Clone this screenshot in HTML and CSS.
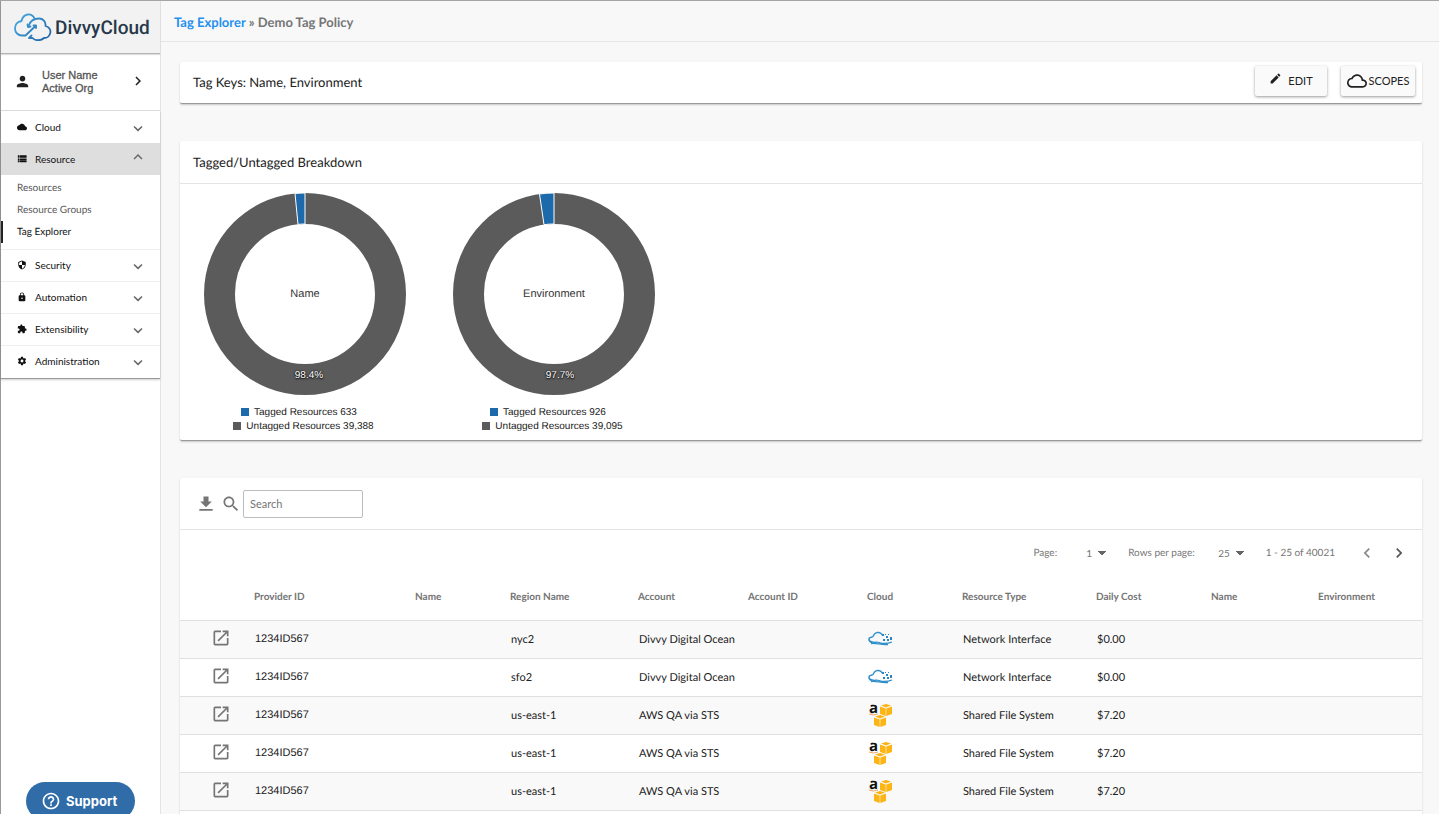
FILE: index.html
```html
<!DOCTYPE html>
<html lang="en">
<head>
    <meta charset="UTF-8">
    <meta name="viewport" content="width=device-width, initial-scale=1.0">
    <title>DivvyCloud - Tag Explorer</title>
    <link rel="stylesheet" href="styles.css">
</head>
<body>

<!-- Shared icons -->
<svg class="sprite" aria-hidden="true">
    <symbol id="chevron-down" viewBox="0 0 24 24"><path d="M7.41 7.84L12 12.42l4.59-4.58L18 9.25l-6 6-6-6z"/></symbol>
    <symbol id="chevron-up" viewBox="0 0 24 24"><path d="M7.41 15.41L12 10.83l4.59 4.58L18 14l-6-6-6 6z"/></symbol>
    <symbol id="chevron-right" viewBox="0 0 24 24"><path d="M8.59 16.59L13.17 12 8.59 7.41 10 6l6 6-6 6z"/></symbol>
    <symbol id="chevron-left" viewBox="0 0 24 24"><path d="M15.41 16.59L10.83 12l4.58-4.59L14 6l-6 6 6 6z"/></symbol>
    <symbol id="open" viewBox="0 0 24 24"><path d="M19 19H5V5h7V3H5c-1.11 0-2 .9-2 2v14c0 1.1.89 2 2 2h14c1.1 0 2-.9 2-2v-7h-2v7zM14 3v2h3.59l-9.83 9.83 1.41 1.41L19 6.41V10h2V3h-7z"/></symbol>
    <symbol id="ocean" viewBox="0 0 26 16">
        <path d="M4 11.500C0 10.500 0 6.500 4 6C5 6 5 5.500 5.500 4.500C7 1 11 .8 13 2.500L14.500 4" fill="none" stroke="#3a93cc" stroke-width="1.600"/>
        <path d="M2 10C5 12.500 8 10.500 11 11.500C15 13 19 13 24 11M3 12.500C9 11.500 13 14.500 20 13.500" fill="none" stroke="#2f8fcb" stroke-width="1.300"/>
        <path d="M14 3h2v2h-2zM17 3h1v1h-1zM18 5h2v2h-2zM22 6h2v3h-2zM15 8h2v2h-2zM19 8h2v2h-2zM20 3h1v1h-1z" fill="#2a83c2"/>
    </symbol>
    <symbol id="box" viewBox="0 0 12 12">
        <path d="M6 0l5 1.500-5 2-5-2z" fill="#fbb316"/>
        <path d="M0 2.500l5.700 2v7.500L0 10zM12 2.500L6.300 4.500v7.500L12 10z" fill="#fcb514"/>
    </symbol>
</svg>

<div class="app">
    <aside class="sidebar">
        <div class="brand">
            <svg class="brand-mark" viewBox="0 0 38 28" aria-hidden="true">
                <defs>
                    <linearGradient id="brand-blue" gradientUnits="userSpaceOnUse" x1="4" y1="2" x2="34" y2="28">
                        <stop offset="0" stop-color="#45a9e0"/>
                        <stop offset="1" stop-color="#1d62a8"/>
                    </linearGradient>
                </defs>
                <g fill="none" stroke="url(#brand-blue)" stroke-width="1.800" stroke-linecap="round" stroke-linejoin="round">
                    <path d="M20.500 5.500C18 0 9.500-.5 7.500 8C3 8.500 1 12 1 15.500C1 19.500 4 22.500 8 22.500H11.500L21.500 13"/>
                    <path d="M19.500 12.500L22 12.500L22 15"/>
                    <path d="M14.500 13C16 8.500 20 5.500 25 5.500C29 5.500 32 8.500 31.500 13C35 14 36.500 16.500 36.500 19C36 23 33 25 30 25C27 28 21 28 18.500 25H15L17.500 22.500"/>
                    <path d="M13.500 11.500L14 14L16.500 13.500"/>
                </g>
            </svg>
            <span class="brand-name">DivvyCloud</span>
        </div>

        <button class="user" type="button">
            <svg class="user-icon" viewBox="0 0 24 24" aria-hidden="true"><path d="M12 12c2.210 0 4-1.790 4-4s-1.790-4-4-4-4 1.790-4 4 1.790 4 4 4zm0 2c-2.670 0-8 1.340-8 4v2h16v-2c0-2.660-5.330-4-8-4z"/></svg>
            <span class="user-text">User Name<br>Active Org</span>
            <svg class="user-arrow" viewBox="0 0 24 24" aria-hidden="true"><use href="#chevron-right"/></svg>
        </button>

        <nav class="menu">
            <button class="menu-item" type="button">
                <svg class="menu-icon" viewBox="0 0 24 24" aria-hidden="true"><path d="M19.350 10.040C18.670 6.590 15.640 4 12 4 9.110 4 6.600 5.640 5.350 8.040 2.340 8.360 0 10.910 0 14c0 3.310 2.690 6 6 6h13c2.760 0 5-2.240 5-5 0-2.640-2.050-4.780-4.650-4.960z"/></svg>
                <span>Cloud</span>
                <svg class="menu-arrow" viewBox="0 0 24 24" aria-hidden="true"><use href="#chevron-down"/></svg>
            </button>
            <button class="menu-item open" type="button" aria-expanded="true">
                <svg class="menu-icon" viewBox="0 0 24 24" aria-hidden="true"><path d="M2 3h3v4H2zM6 3h17v4H6zM2 8h3v3H2zM6 8h17v3H6zM2 12h3v4H2zM6 12h17v4H6zM2 17h3v3H2zM6 17h17v3H6z"/></svg>
                <span>Resource</span>
                <svg class="menu-arrow" viewBox="0 0 24 24" aria-hidden="true"><use href="#chevron-up"/></svg>
            </button>
            <div class="submenu">
                <a href="#">Resources</a>
                <a href="#">Resource Groups</a>
                <a href="#" class="active">Tag Explorer</a>
            </div>
            <button class="menu-item" type="button">
                <svg class="menu-icon" viewBox="0 0 24 24" aria-hidden="true"><path d="M12 1L3 5v6c0 5.550 3.840 10.740 9 12 5.160-1.260 9-6.450 9-12V5l-9-4zm0 10.990h7c-.53 4.120-3.280 7.790-7 8.940V12H5V6.300l7-3.110v8.800z"/></svg>
                <span>Security</span>
                <svg class="menu-arrow" viewBox="0 0 24 24" aria-hidden="true"><use href="#chevron-down"/></svg>
            </button>
            <button class="menu-item" type="button">
                <svg class="menu-icon" viewBox="0 0 24 24" aria-hidden="true"><path d="M18 8h-1V6c0-2.760-2.240-5-5-5S7 3.240 7 6v2H6c-1.100 0-2 .9-2 2v10c0 1.100.9 2 2 2h12c1.100 0 2-.9 2-2V10c0-1.100-.9-2-2-2zm-6 9c-1.100 0-2-.9-2-2s.9-2 2-2 2 .9 2 2-.9 2-2 2zm3.100-9H8.900V6c0-1.710 1.390-3.100 3.100-3.100 1.710 0 3.100 1.390 3.100 3.100v2z"/></svg>
                <span>Automation</span>
                <svg class="menu-arrow" viewBox="0 0 24 24" aria-hidden="true"><use href="#chevron-down"/></svg>
            </button>
            <button class="menu-item" type="button">
                <svg class="menu-icon" viewBox="0 0 24 24" aria-hidden="true"><path d="M20.500 11H19V7c0-1.100-.9-2-2-2h-4V3.500C13 2.120 11.880 1 10.500 1S8 2.120 8 3.500V5H4c-1.100 0-1.990.9-1.990 2v3.800H3.500c1.490 0 2.700 1.210 2.700 2.700s-1.210 2.700-2.700 2.700H2V20c0 1.100.9 2 2 2h3.800v-1.500c0-1.490 1.210-2.700 2.700-2.700 1.490 0 2.700 1.210 2.700 2.700V22H17c1.100 0 2-.9 2-2v-4h1.500c1.380 0 2.500-1.120 2.500-2.500S21.880 11 20.500 11z"/></svg>
                <span>Extensibility</span>
                <svg class="menu-arrow" viewBox="0 0 24 24" aria-hidden="true"><use href="#chevron-down"/></svg>
            </button>
            <button class="menu-item" type="button">
                <svg class="menu-icon" viewBox="0 0 24 24" aria-hidden="true"><path d="M19.430 12.980c.04-.32.07-.64.07-.98s-.03-.66-.07-.98l2.110-1.650c.19-.15.24-.42.12-.64l-2-3.460c-.12-.22-.39-.3-.61-.22l-2.490 1c-.52-.4-1.080-.73-1.690-.98l-.38-2.650C14.460 2.180 14.250 2 14 2h-4c-.25 0-.46.18-.49.42l-.38 2.650c-.61.25-1.170.59-1.690.98l-2.490-1c-.23-.09-.49 0-.61.22l-2 3.460c-.13.22-.07.49.12.64l2.110 1.650c-.04.32-.07.65-.07.98s.03.66.07.98l-2.110 1.650c-.19.15-.24.42-.12.64l2 3.460c.12.22.39.3.61.22l2.490-1c.52.4 1.080.73 1.690.98l.38 2.650c.03.24.24.42.49.42h4c.25 0 .46-.18.49-.42l.38-2.650c.61-.25 1.170-.59 1.690-.98l2.490 1c.23.09.49 0 .61-.22l2-3.460c.12-.22.07-.49-.12-.64l-2.110-1.650zM12 15.500c-1.930 0-3.500-1.570-3.500-3.500s1.570-3.500 3.500-3.500 3.500 1.570 3.500 3.500-1.570 3.500-3.500 3.500z"/></svg>
                <span>Administration</span>
                <svg class="menu-arrow" viewBox="0 0 24 24" aria-hidden="true"><use href="#chevron-down"/></svg>
            </button>
        </nav>
    </aside>

    <div class="page">
        <header class="topbar">
            <a href="#">Tag Explorer</a> » Demo Tag Policy
        </header>

        <main class="content">
            <section class="card keys">
                <h2>Tag Keys: Name, Environment</h2>
                <button class="btn" type="button">
                    <svg class="pencil" viewBox="0 0 24 24" aria-hidden="true"><path d="M3 17.250V21h3.750L17.810 9.940l-3.750-3.750L3 17.250zM20.710 7.040c.39-.39.39-1.020 0-1.410l-2.340-2.340c-.39-.39-1.020-.39-1.410 0l-1.830 1.830 3.750 3.750 1.830-1.830z"/></svg>
                    EDIT
                </button>
                <button class="btn btn-scopes" type="button">
                    <svg class="cloud" viewBox="0 0 24 24" aria-hidden="true"><path d="M19.350 10.040C18.670 6.590 15.640 4 12 4 9.110 4 6.600 5.640 5.350 8.040 2.340 8.360 0 10.910 0 14c0 3.310 2.690 6 6 6h13c2.760 0 5-2.240 5-5 0-2.640-2.050-4.780-4.650-4.960zM19 18H6c-2.210 0-4-1.790-4-4s1.790-4 4-4h.71C7.370 7.690 9.480 6 12 6c3.040 0 5.500 2.460 5.500 5.500v.5H19c1.660 0 3 1.340 3 3s-1.340 3-3 3z"/></svg>
                    SCOPES
                </button>
            </section>

            <section class="card">
                <h2 class="card-title">Tagged/Untagged Breakdown</h2>
                <div class="charts">
                    <figure class="chart">
                        <svg class="donut" viewBox="0 0 202 202" role="img" aria-label="Name: 98.4% untagged">
                            <circle cx="101" cy="101" r="85.500" fill="none" stroke="#5b5b5b" stroke-width="31"/>
                            <path d="M101 0L101 31A70 70 0 0 0 94 31.400L91 0.500A101 101 0 0 1 101 0z" fill="#1c6aab" stroke="#fff"/>
                            <text x="101" y="104" class="donut-name">Name</text>
                            <text x="105" y="185" class="donut-value">98.4%</text>
                        </svg>
                        <figcaption class="legend">
                            <span class="legend-row"><i class="swatch tagged"></i>Tagged Resources 633</span>
                            <span class="legend-row"><i class="swatch"></i>Untagged Resources 39,388</span>
                        </figcaption>
                    </figure>
                    <figure class="chart">
                        <svg class="donut" viewBox="0 0 202 202" role="img" aria-label="Environment: 97.7% untagged">
                            <circle cx="101" cy="101" r="85.500" fill="none" stroke="#5b5b5b" stroke-width="31"/>
                            <path d="M101 0L101 31A70 70 0 0 0 91 31.700L86.500 1A101 101 0 0 1 101 0z" fill="#1c6aab" stroke="#fff"/>
                            <text x="101" y="104" class="donut-name">Environment</text>
                            <text x="107" y="185" class="donut-value">97.7%</text>
                        </svg>
                        <figcaption class="legend">
                            <span class="legend-row"><i class="swatch tagged"></i>Tagged Resources 926</span>
                            <span class="legend-row"><i class="swatch"></i>Untagged Resources 39,095</span>
                        </figcaption>
                    </figure>
                </div>
            </section>

            <section class="card listing">
                <div class="toolbar">
                    <button class="icon-btn" type="button" aria-label="Download">
                        <svg viewBox="0 0 24 24" aria-hidden="true"><path d="M19 9h-4V3H9v6H5l7 7 7-7zM4 18v2h16v-2H4z"/></svg>
                    </button>
                    <div class="search-box">
                        <label for="search" class="icon-btn" aria-label="Search">
                            <svg viewBox="0 0 24 24" aria-hidden="true"><path d="M15.500 14h-.79l-.28-.27C15.410 12.590 16 11.110 16 9.500 16 5.910 13.090 3 9.500 3S3 5.910 3 9.500 5.910 16 9.500 16c1.610 0 3.090-.59 4.230-1.570l.27.28v.79l5 4.990L20.490 19l-4.990-5zm-6 0C7.010 14 5 11.990 5 9.500S7.010 5 9.500 5 14 7.010 14 9.500 11.990 14 9.500 14z"/></svg>
                        </label>
                        <input type="text" id="search" class="search" placeholder="Search">
                    </div>
                </div>

                <div class="pager">
                    <label for="page">Page:</label>
                    <select id="page"><option>1</option></select>
                    <label for="rows">Rows per page:</label>
                    <select id="rows"><option>25</option></select>
                    <span class="range">1 - 25 of 40021</span>
                    <button class="page-btn" type="button" aria-label="Previous page" disabled><svg viewBox="0 0 24 24" aria-hidden="true"><use href="#chevron-left"/></svg></button>
                    <button class="page-btn" type="button" aria-label="Next page"><svg viewBox="0 0 24 24" aria-hidden="true"><use href="#chevron-right"/></svg></button>
                </div>

                <table class="resources">
                    <thead>
                        <tr>
                            <th class="col-open"></th>
                            <th class="col-provider">Provider ID</th>
                            <th class="col-name">Name</th>
                            <th class="col-region">Region Name</th>
                            <th class="col-account">Account</th>
                            <th class="col-account-id">Account ID</th>
                            <th class="col-cloud">Cloud</th>
                            <th class="col-type">Resource Type</th>
                            <th class="col-cost">Daily Cost</th>
                            <th class="col-tag">Name</th>
                            <th class="col-env">Environment</th>
                        </tr>
                    </thead>
                    <tbody>
                        <tr>
                            <td class="open-cell"><a href="#" aria-label="Open"><svg viewBox="0 0 24 24"><use href="#open"/></svg></a></td>
                            <td class="provider">1234ID567</td><td></td><td>nyc2</td><td>Divvy Digital Ocean</td><td></td>
                            <td class="cloud-cell"><svg class="ocean" role="img" aria-label="Digital Ocean"><use href="#ocean"/></svg></td>
                            <td>Network Interface</td><td>$0.00</td><td></td><td></td>
                        </tr>
                        <tr>
                            <td class="open-cell"><a href="#" aria-label="Open"><svg viewBox="0 0 24 24"><use href="#open"/></svg></a></td>
                            <td class="provider">1234ID567</td><td></td><td>sfo2</td><td>Divvy Digital Ocean</td><td></td>
                            <td class="cloud-cell"><svg class="ocean" role="img" aria-label="Digital Ocean"><use href="#ocean"/></svg></td>
                            <td>Network Interface</td><td>$0.00</td><td></td><td></td>
                        </tr>
                        <tr>
                            <td class="open-cell"><a href="#" aria-label="Open"><svg viewBox="0 0 24 24"><use href="#open"/></svg></a></td>
                            <td class="provider">1234ID567</td><td></td><td>us-east-1</td><td>AWS QA via STS</td><td></td>
                            <td class="cloud-cell">
                                <svg class="aws" viewBox="0 -6 25 36" role="img" aria-label="Amazon Web Services">
                                    <text x="1" y="10" class="aws-letter">a</text>
                                    <path d="M1 11Q5 13 10 11" fill="none" stroke="#f0a66a"/>
                                    <use href="#box" x="12" y="1" width="12" height="12"/>
                                    <use href="#box" x="6" y="12" width="12" height="12"/>
                                </svg>
                            </td>
                            <td>Shared File System</td><td>$7.20</td><td></td><td></td>
                        </tr>
                        <tr>
                            <td class="open-cell"><a href="#" aria-label="Open"><svg viewBox="0 0 24 24"><use href="#open"/></svg></a></td>
                            <td class="provider">1234ID567</td><td></td><td>us-east-1</td><td>AWS QA via STS</td><td></td>
                            <td class="cloud-cell">
                                <svg class="aws" viewBox="0 -6 25 36" role="img" aria-label="Amazon Web Services">
                                    <text x="1" y="10" class="aws-letter">a</text>
                                    <path d="M1 11Q5 13 10 11" fill="none" stroke="#f0a66a"/>
                                    <use href="#box" x="12" y="1" width="12" height="12"/>
                                    <use href="#box" x="6" y="12" width="12" height="12"/>
                                </svg>
                            </td>
                            <td>Shared File System</td><td>$7.20</td><td></td><td></td>
                        </tr>
                        <tr>
                            <td class="open-cell"><a href="#" aria-label="Open"><svg viewBox="0 0 24 24"><use href="#open"/></svg></a></td>
                            <td class="provider">1234ID567</td><td></td><td>us-east-1</td><td>AWS QA via STS</td><td></td>
                            <td class="cloud-cell">
                                <svg class="aws" viewBox="0 -6 25 36" role="img" aria-label="Amazon Web Services">
                                    <text x="1" y="10" class="aws-letter">a</text>
                                    <path d="M1 11Q5 13 10 11" fill="none" stroke="#f0a66a"/>
                                    <use href="#box" x="12" y="1" width="12" height="12"/>
                                    <use href="#box" x="6" y="12" width="12" height="12"/>
                                </svg>
                            </td>
                            <td>Shared File System</td><td>$7.20</td><td></td><td></td>
                        </tr>
                    </tbody>
                </table>
            </section>
        </main>
    </div>
</div>

<button class="support" type="button">
    <svg viewBox="0 0 24 24" aria-hidden="true"><path d="M11 18h2v-2h-2v2zm1-16C6.480 2 2 6.480 2 12s4.480 10 10 10 10-4.480 10-10S17.520 2 12 2zm0 18c-4.410 0-8-3.590-8-8s3.590-8 8-8 8 3.590 8 8-3.590 8-8 8zm0-14c-2.210 0-4 1.790-4 4h2c0-1.100.9-2 2-2s2 .9 2 2c0 2-3 1.750-3 5h2c0-2.250 3-2.500 3-5 0-2.210-1.790-4-4-4z"/></svg>
    Support
</button>

</body>
</html>
```
FILE: styles.css
```css
* {
    box-sizing: border-box;
}

body {
    margin: 0;
    font-family: Lato, sans-serif;
    font-size: 11px;
    line-height: 16px;
    color: #212121;
    background-color: #f8f8f8;
    height: 100vh;
    overflow: hidden;
    text-rendering: geometricPrecision;
}

button {
    font: inherit;
    color: inherit;
    border: none;
    background: none;
    padding: 0;
    cursor: pointer;
}

a {
    color: inherit;
    text-decoration: none;
}

svg {
    display: block;
    flex: none;
    fill: currentColor;
}

.sprite {
    position: absolute;
    width: 0;
    height: 0;
}

.app {
    display: flex;
    min-height: 100vh;
    border-top: 1px solid #a5a5a5;
}

/* Sidebar */
.sidebar {
    flex: none;
    width: 161px;
    background-color: #fff;
    border-left: 1px solid #999;
    border-right: 1px solid #e4e4e4;
}

.brand {
    display: flex;
    align-items: center;
    gap: 3px;
    height: 53px;
    padding-left: 13px;
    background-color: #f2f2f2;
    border-bottom: 1px solid #b4b4b4;
    box-shadow: 0 1px 1px rgba(0, 0, 0, 0.12);
}

.brand-mark {
    width: 38px;
    height: 28px;
}

.brand-name {
    font-family: Roboto, sans-serif;
    font-size: 19px;
    font-weight: 500;
    line-height: 24px;
    color: #26384a;
    padding-top: 2px;
}

.user {
    display: flex;
    align-items: center;
    width: 100%;
    height: 57px;
    padding: 0 13px 2px;
    border-bottom: 1px solid #ddd;
    text-align: left;
}

.user-icon {
    width: 17px;
    height: 17px;
}

.user-text {
    flex: 1;
    padding: 2px 0 0 11px;
    font-family: "Liberation Sans", sans-serif;
    font-size: 11px;
    line-height: 13px;
    color: #555;
    -webkit-text-stroke: 0.3px #555;
}

.user-arrow {
    width: 18px;
    height: 18px;
}

.menu {
    padding-bottom: 1px;
    border-bottom: 1px solid #999;
    box-shadow: 0 1px 2px rgba(0, 0, 0, 0.2);
}

.menu-item {
    display: flex;
    align-items: center;
    width: 100%;
    height: 32px;
    padding: 0 13px 1px 16px;
    font-size: 10px;
    color: #111;
    box-shadow: inset 0 1px #eee;
    text-align: left;
}

.menu-item:first-child {
    box-shadow: none;
}

.menu-item span {
    flex: 1;
    padding-left: 8px;
}

.menu-icon {
    width: 10px;
    height: 10px;
}

.menu-arrow {
    width: 18px;
    height: 18px;
    margin-top: 5px;
    color: #666;
}

.menu-item.open {
    background-color: #dedede;
    box-shadow: none;
}

.menu-item.open .menu-arrow {
    margin-top: 0;
    margin-bottom: 4px;
}

.submenu {
    padding: 2px 0 6px;
}

.submenu a {
    display: block;
    padding: 3px 0 3px 16px;
    font-size: 10px;
    color: #555;
}

.submenu .active {
    color: #111;
    box-shadow: inset 2px 0 #222;
}

/* Page */
.page {
    flex: 1;
    min-width: 0;
}

.topbar {
    height: 41px;
    padding: 12px 13px;
    font-size: 13px;
    line-height: 18px;
    font-weight: bold;
    color: #757575;
    border-bottom: 1px solid #e6e6e6;
}

.topbar a {
    color: #2391ee;
}

.content {
    display: flex;
    flex-direction: column;
    gap: 37px;
    padding: 20px 17px 0 19px;
}

.card {
    background-color: #fff;
    border-bottom: 1px solid #999;
    border-radius: 2px;
    box-shadow: 0 1px 2px rgba(0, 0, 0, 0.2);
}

h2 {
    margin: 0;
    font-size: 13px;
    line-height: 18px;
    font-weight: normal;
}

.keys {
    display: flex;
    gap: 14px;
    height: 42px;
    padding: 4px 7px 0 13px;
}

.keys h2 {
    flex: 1;
    padding-top: 7px;
}

.btn {
    display: flex;
    justify-content: center;
    align-items: center;
    gap: 6px;
    width: 72px;
    height: 30px;
    background-color: #fafafa;
    border-radius: 2px;
    box-shadow: 0 1px 3px rgba(0, 0, 0, 0.4);
}

.btn-scopes {
    gap: 2px;
    width: 74px;
}

.pencil {
    width: 13px;
    height: 13px;
    margin-bottom: 6px;
}

.cloud {
    width: 20px;
    height: 20px;
}

.card-title {
    padding: 12px 13px;
    border-bottom: 1px solid #e4e4e4;
}

/* Charts */
.charts {
    display: flex;
    gap: 47px;
    padding: 9px 24px 6px;
}

.chart {
    margin: 0;
    font-family: "Liberation Sans", sans-serif;
}

.donut {
    width: 202px;
    height: 202px;
}

.donut-name {
    font-size: 11px;
    text-anchor: middle;
    fill: #333;
}

.donut-value {
    font-size: 10px;
    text-anchor: middle;
    fill: #fff;
    text-shadow: 0 0 2px #000, 0 1px 2px #000;
}

.legend {
    display: flex;
    flex-direction: column;
    align-items: center;
    padding-top: 11px;
    font-size: 10px;
    line-height: 14px;
}

.legend-row {
    display: flex;
    align-items: center;
    gap: 5px;
    padding-right: 3px;
}

.legend-row:first-child {
    padding-right: 12px;
}

.swatch {
    width: 8px;
    height: 8px;
    margin-bottom: 2px;
    background-color: #5b5b5b;
}

.swatch.tagged {
    background-color: #1c6aab;
}

/* Table card */
.listing {
    padding-bottom: 20px;
}

.toolbar {
    display: flex;
    align-items: center;
    gap: 5px;
    height: 52px;
    padding: 0 16px;
    border-bottom: 1px solid #e4e4e4;
}

.search-box {
    display: flex;
    align-items: center;
    gap: 2px;
}

.icon-btn {
    color: #757575;
}

.icon-btn svg {
    width: 20px;
    height: 20px;
}

.search {
    width: 120px;
    height: 28px;
    padding: 0 6px;
    font: inherit;
    border: 1px solid #bbb;
    border-radius: 2px;
}

.search::placeholder {
    color: #757575;
}

.pager {
    display: flex;
    justify-content: flex-end;
    align-items: center;
    height: 45px;
    padding-right: 13px;
    font-size: 10px;
    color: #757575;
}

.pager select {
    appearance: none;
    width: 49px;
    height: 16px;
    margin: 0 22px 0 0;
    padding: 0 14px 0 0;
    font: inherit;
    color: inherit;
    border: none;
    /* two halves of the drop-down arrow */
    background-image: linear-gradient(to bottom left, #666 50%, transparent 50%), linear-gradient(to bottom right, #666 50%, transparent 50%);
    background-position: right 4px top 6px, right 0 top 6px;
    background-size: 4px 5px;
    background-repeat: no-repeat;
    background-color: transparent;
    text-align: right;
    text-align-last: right;
}

.range {
    margin-right: 22px;
}

.page-btn {
    color: #555;
}

.page-btn + .page-btn {
    margin-left: 12px;
}

.page-btn:disabled {
    color: #888;
}

.page-btn svg {
    width: 20px;
    height: 20px;
}

.resources {
    width: 100%;
    table-layout: fixed;
    border-collapse: collapse;
}

.resources th {
    height: 45px;
    padding: 0;
    font-size: 10px;
    color: #757575;
    text-align: left;
}

.resources td {
    height: 38px;
    padding: 2px 0 0 1px;
    border-top: 1px solid #e0e0e0;
}

.resources tbody tr:nth-child(odd) {
    background-color: #f9f9f9;
}

.resources tbody tr:last-child td {
    border-bottom: 1px solid #e0e0e0;
}

.resources .open-cell {
    padding: 0 0 2px 31px;
    color: #757575;
}

.resources .cloud-cell {
    padding-top: 0;
}

.open-cell svg {
    width: 20px;
    height: 20px;
}

.resources .provider {
    padding-top: 0;
    font-family: "Liberation Sans", sans-serif;
}

.col-open { width: 74px; }
.col-provider { width: 161px; }
.col-name { width: 95px; }
.col-region { width: 128px; }
.col-account { width: 110px; }
.col-account-id { width: 119px; }
.col-cloud { width: 95px; }
.col-type { width: 134px; }
.col-cost { width: 115px; }
.col-tag { width: 107px; }
.col-env { width: 104px; }

.ocean {
    width: 26px;
    height: 16px;
}

.aws {
    width: 25px;
    height: 36px;
}

.aws-letter {
    font-family: "Open Sans", sans-serif;
    font-size: 15px;
    font-weight: bold;
    fill: #111;
}

/* Support widget */
.support {
    position: fixed;
    left: 26px;
    bottom: -6px;
    display: flex;
    align-items: center;
    gap: 5px;
    height: 38px;
    padding: 0 18px 0 15px;
    font-family: Inter, sans-serif;
    font-size: 13px;
    font-weight: bold;
    color: #fff;
    background-color: #2f6ca8;
    border-radius: 19px;
}

.support svg {
    width: 20px;
    height: 20px;
}
```
